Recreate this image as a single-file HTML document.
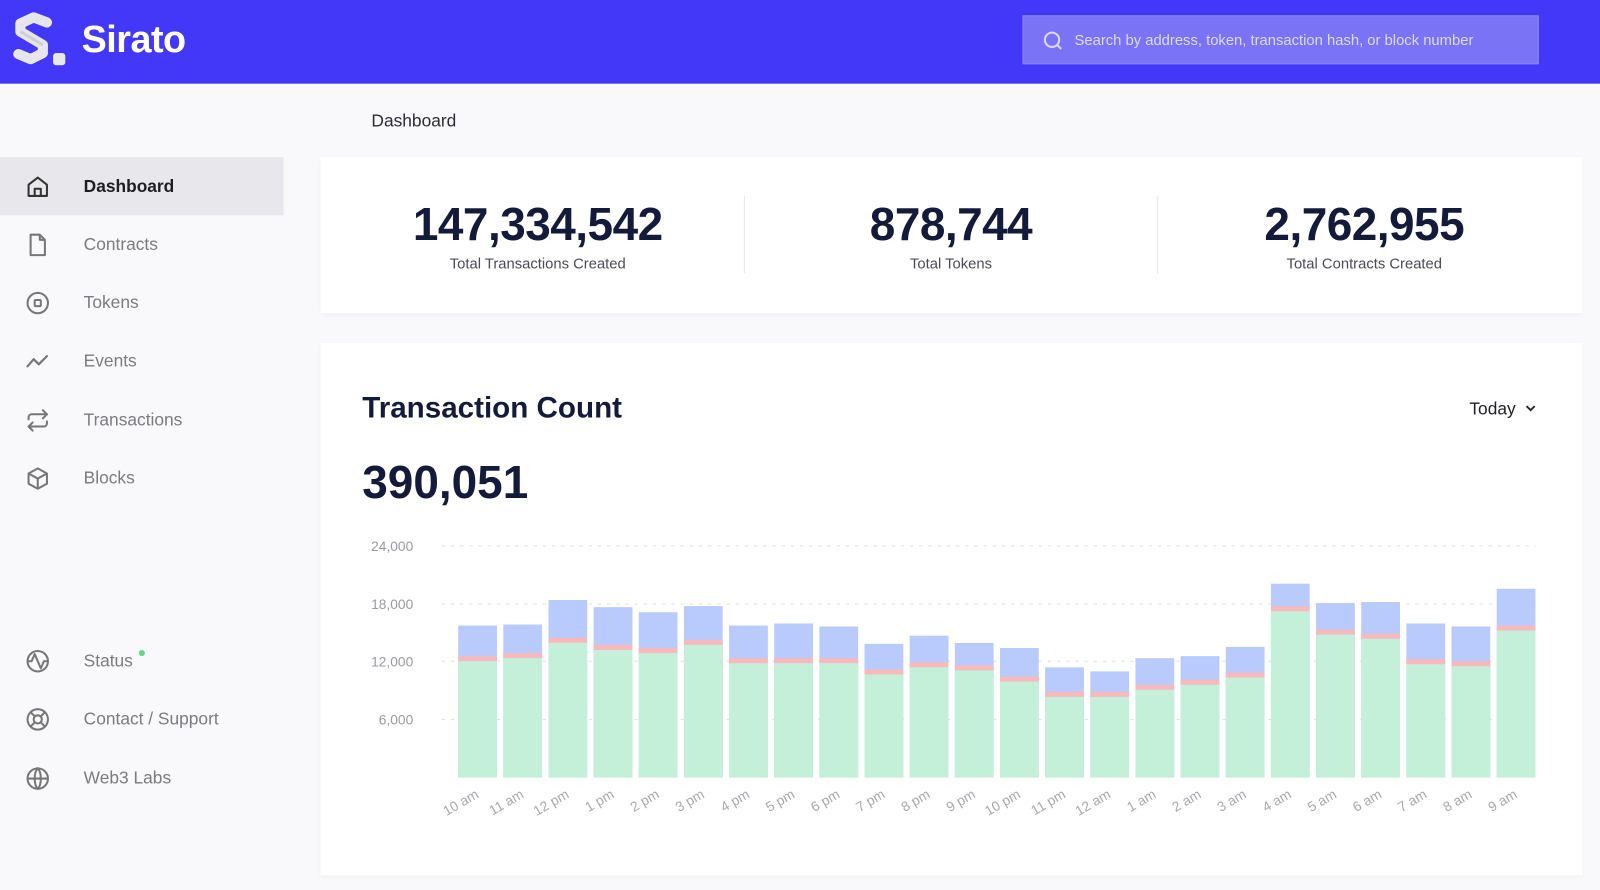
<!DOCTYPE html>
<html><head><meta charset="utf-8">
<style>
*{box-sizing:border-box;margin:0;padding:0}
html,body{width:1600px;height:890px;overflow:hidden;background:#f9f9fb}
body{font-family:"Liberation Sans",Arial,sans-serif}
#w{width:1568px;height:872px;transform:scale(1.020408);transform-origin:0 0;position:relative;background:#f9f9fb}
.hdr{position:absolute;left:0;top:0;width:1568px;height:82px;background:#4438f8}
.brand{position:absolute;left:80px;top:18px;color:#fff;font-size:37px;font-weight:bold;letter-spacing:-0.5px}
.search{position:absolute;left:1002px;top:15px;width:506px;height:48px;background:#7a73f6;border:1px solid #8b85f8}
.search span{position:absolute;left:50px;top:16px;color:#dcdafc;font-size:14.5px}
.nav{position:absolute;left:0;width:278px;height:57px}
.nav.act{background:#e8e8ec}
.nav svg{position:absolute;left:25px;top:17px}
.nav span{position:absolute;left:82px;top:19px;font-size:17px;color:#7b7b80}
.nav.act span{color:#1e1e24;font-weight:bold}
.crumb{position:absolute;left:364px;top:109px;font-size:17px;color:#2c2c33}
.card{position:absolute;left:314px;width:1237px;background:#fff;box-shadow:0 1px 4px rgba(0,0,0,.06)}
.stat{position:absolute;top:40px;width:400px;text-align:center}
.stat b{display:block;font-size:45px;color:#141a3a;letter-spacing:-0.5px}
.stat span{display:block;font-size:14.5px;color:#4b4b55;margin-top:5px}
.div{position:absolute;top:38px;width:1px;height:76px;background:#e6e6ea}
</style></head><body><div id="w">
<div class="hdr">
<svg style="position:absolute;left:8px;top:12px" width="60" height="56" viewBox="0 0 60 56">
<path d="M38 10 L25 5 L12 11 L12 19 L34 32 L34 40 L22 46 L10 41" fill="none" stroke="#e6e6ec" stroke-width="10" stroke-linejoin="round" stroke-linecap="round"/>
<path d="M12 19 L34 32" stroke="#cfcfd8" stroke-width="3"/>
<rect x="44" y="40" width="12" height="12" rx="3" fill="#e8e8ec"/></svg>
<div class="brand">Sirato</div>
<div class="search"><svg style="position:absolute;left:19px;top:14px" width="20" height="20" viewBox="0 0 20 20" fill="none" stroke="#dcdafc" stroke-width="2"><circle cx="9" cy="9" r="7"/><path d="M14 14 L18 18"/></svg><span>Search by address, token, transaction hash, or block number</span></div>
</div>

<div class="nav act" style="top:154px"><svg width="24" height="24" viewBox="0 0 24 24" fill="none" stroke="#333" stroke-width="2" stroke-linejoin="round"><path d="M3 10 L12 3 L21 10 V21 H3 Z"/><path d="M9 21 V14 H15 V21"/></svg><span>Dashboard</span></div>
<div class="nav" style="top:211px"><svg width="24" height="24" viewBox="0 0 24 24" fill="none" stroke="#777" stroke-width="2" stroke-linejoin="round"><path d="M5 2 H14 L19 7 V22 H5 Z"/><path d="M14 2 V7 H19"/></svg><span>Contracts</span></div>
<div class="nav" style="top:268px"><svg width="24" height="24" viewBox="0 0 24 24" fill="none" stroke="#777" stroke-width="2"><circle cx="12" cy="12" r="10"/><rect x="9" y="9" width="6" height="6" rx="1"/></svg><span>Tokens</span></div>
<div class="nav" style="top:325px"><svg width="24" height="24" viewBox="0 0 24 24" fill="none" stroke="#777" stroke-width="2.2" stroke-linecap="round" stroke-linejoin="round"><path d="M2 17 L8 10 L13 15 L21 7"/></svg><span>Events</span></div>
<div class="nav" style="top:383px"><svg width="24" height="24" viewBox="0 0 24 24" fill="none" stroke="#777" stroke-width="2" stroke-linecap="round" stroke-linejoin="round"><path d="M17 2 L21 6 L17 10"/><path d="M3 11 V9 A3 3 0 0 1 6 6 H21"/><path d="M7 22 L3 18 L7 14"/><path d="M21 13 V15 A3 3 0 0 1 18 18 H3"/></svg><span>Transactions</span></div>
<div class="nav" style="top:440px"><svg width="24" height="24" viewBox="0 0 24 24" fill="none" stroke="#777" stroke-width="2" stroke-linejoin="round"><path d="M12 2 L21 7 V17 L12 22 L3 17 V7 Z"/><path d="M3 7 L12 12 L21 7 M12 12 V22"/></svg><span>Blocks</span></div>
<div class="nav" style="top:619px"><svg width="24" height="24" viewBox="0 0 24 24" fill="none" stroke="#777" stroke-width="2" stroke-linejoin="round"><circle cx="12" cy="12" r="10"/><path d="M2 12 H6 L9 5 L15 19 L18 12 H22"/></svg><span>Status</span><i style="position:absolute;left:136px;top:18px;width:6px;height:6px;border-radius:50%;background:#5edc7e"></i></div>
<div class="nav" style="top:676px"><svg width="24" height="24" viewBox="0 0 24 24" fill="none" stroke="#777" stroke-width="2"><circle cx="12" cy="12" r="10"/><circle cx="12" cy="12" r="4"/><path d="M5 5 L9 9 M15 15 L19 19 M19 5 L15 9 M9 15 L5 19"/></svg><span>Contact / Support</span></div>
<div class="nav" style="top:734px"><svg width="24" height="24" viewBox="0 0 24 24" fill="none" stroke="#777" stroke-width="2"><circle cx="12" cy="12" r="10"/><path d="M2 12 H22"/><path d="M12 2 C16 6 16 18 12 22 C8 18 8 6 12 2 Z"/></svg><span>Web3 Labs</span></div>

<div class="crumb">Dashboard</div>

<div class="card" style="top:154px;height:153px">
<div class="stat" style="left:13px"><b>147,334,542</b><span>Total Transactions Created</span></div>
<div class="div" style="left:415px"></div>
<div class="stat" style="left:418px"><b>878,744</b><span>Total Tokens</span></div>
<div class="div" style="left:820px"></div>
<div class="stat" style="left:823px"><b>2,762,955</b><span>Total Contracts Created</span></div>
</div>

<div class="card" style="top:336px;height:522px"></div>
<div style="position:absolute;left:355px;top:384px;font-size:29px;font-weight:bold;color:#141a3a">Transaction Count</div>
<div style="position:absolute;left:355px;top:447px;font-size:45px;font-weight:bold;color:#141a3a">390,051</div>
<div style="position:absolute;left:1440px;top:391px;font-size:17px;color:#1e1e24">Today <svg width="12" height="12" viewBox="0 0 12 12" style="margin-left:4px"><path d="M2 4 L6 8 L10 4" fill="none" stroke="#222" stroke-width="1.8"/></svg></div>

<svg id="ch" style="position:absolute;left:0;top:0" width="1568" height="872" font-family="Liberation Sans, Arial, sans-serif"></svg>
<script>
var s='';
var g=[[535,'24,000'],[592,'18,000'],[648,'12,000'],[705,'6,000']];
g.forEach(function(a){s+='<line x1="433" x2="1505" y1="'+a[0]+'" y2="'+a[0]+'" stroke="#ddd" stroke-dasharray="3 6"/><text x="405" y="'+(a[0]+5)+'" text-anchor="end" font-size="13.5" fill="#9a9aa2">'+a[1]+'</text>';});
var b=[[613,648],[612,645],[588,630],[595,637],[600,640],[594,632],[613,650],[611,650],[614,650],[631,661],[623,654],[630,657],[635,668],[654,683],[658,683],[645,676],[643,671],[634,664],[572,599],[591,622],[590,626],[611,651],[614,653],[577,618]];
var L=['10 am','11 am','12 pm','1 pm','2 pm','3 pm','4 pm','5 pm','6 pm','7 pm','8 pm','9 pm','10 pm','11 pm','12 am','1 am','2 am','3 am','4 am','5 am','6 am','7 am','8 am','9 am'];
b.forEach(function(v,i){var x=449+i*44.25,w=38;
s+='<rect x="'+x+'" y="'+v[0]+'" width="'+w+'" height="'+(762-v[0])+'" fill="#b9cafd"/>';
s+='<rect x="'+x+'" y="'+(v[1]-5)+'" width="'+w+'" height="5" fill="#f8b9bc"/>';
s+='<rect x="'+x+'" y="'+v[1]+'" width="'+w+'" height="'+(762-v[1])+'" fill="#c4f0da"/>';
var cx=x+w/2+2;
s+='<text transform="translate('+cx+',781) rotate(-30)" text-anchor="end" font-size="13.5" fill="#a8a8ae">'+L[i]+'</text>';});
document.getElementById('ch').innerHTML=s;
</script>
</div></body></html>
